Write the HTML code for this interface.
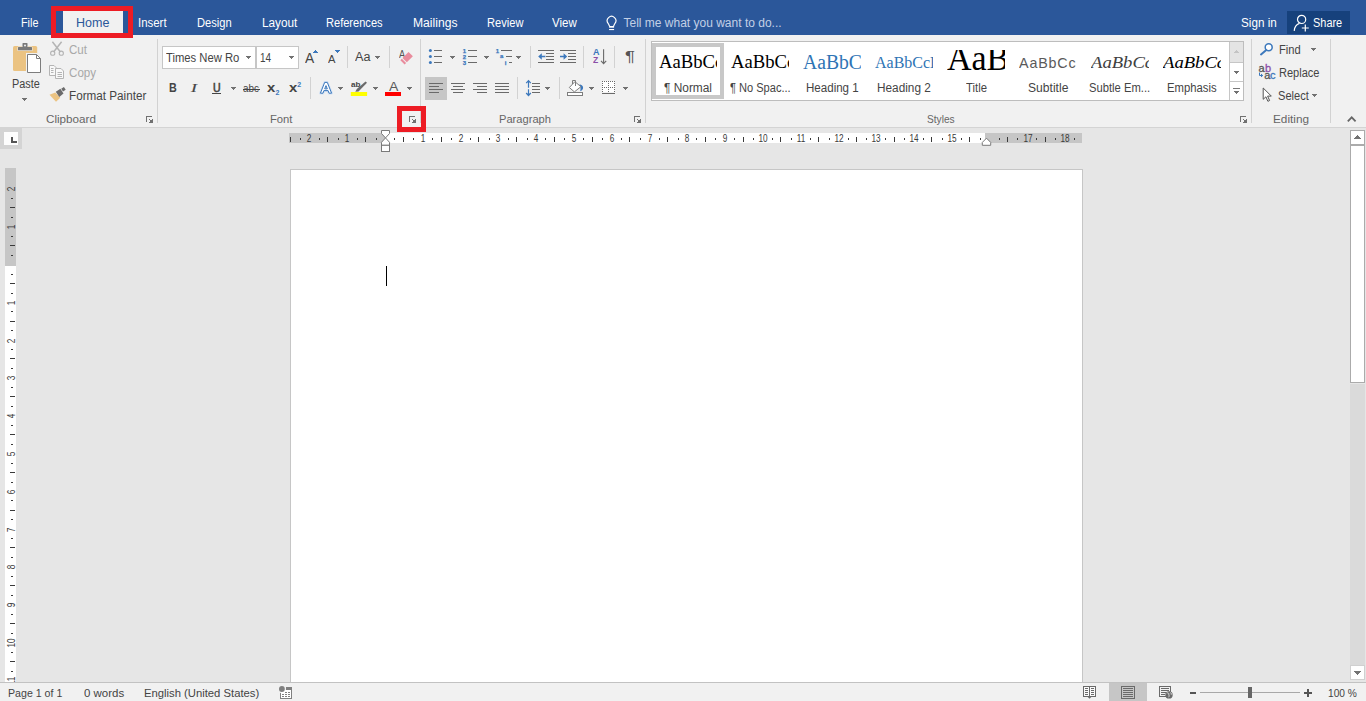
<!DOCTYPE html>
<html lang="en">
<head>
<meta charset="utf-8">
<title>Document1 - Word</title>
<style>
html,body{margin:0;padding:0}
body{width:1366px;height:701px;overflow:hidden;position:relative;background:#e6e6e6;
 font-family:"Liberation Sans",sans-serif;font-size:12px;color:#444}
.a{position:absolute}
.t{position:absolute;white-space:nowrap;line-height:16px;height:16px;transform-origin:0 0}
#tabs{left:0;top:0;width:1366px;height:35px;background:#2b579a}
#tabs .t{color:#fff;font-size:12px;top:15px}
#ribbon{left:0;top:35px;width:1366px;height:92px;background:#f1f1f1;border-bottom:1px solid #d4d4d4}
.gl{top:111.200px;color:#666;font-size:11px}
.sep{position:absolute;width:1px;background:#d2d2d2}
.r1{top:42px}.r2{top:65px}.r3{top:88px}
.dis{color:#a8a8a8}
.pv{position:absolute;top:46px;width:58px;height:32px;overflow:hidden;line-height:44px;font-size:0;white-space:nowrap}
.pv span{position:relative;line-height:0;font-family:'Liberation Serif',serif;color:#000}
.sl{top:79.500px}
.rn{top:130.900px;width:20px;text-align:center;font-size:10px;color:#3a3a3a;transform:scaleX(.820);transform-origin:50% 0}
.vn{left:1.500px;width:20px;text-align:center;font-size:10px;color:#3a3a3a;transform:rotate(-90deg) scaleX(.820);transform-origin:50% 50%}
.rp{font-size:11px;-webkit-text-stroke:.300px currentColor}
.tiny{font-size:6px;font-weight:bold;color:#3c78bc;-webkit-text-stroke:.250px #3c78bc;margin-top:-.700px}
#status{left:0;top:682px;width:1366px;height:18px;background:#f1f1f1;border-top:1px solid #c2c2c2}
#status .t{top:2.200px;color:#444;font-size:11px}
#page{left:290px;top:169px;width:791px;height:520px;background:#fff;border:1px solid #c6c6c6}
svg{position:absolute;overflow:visible}
</style>
</head>
<body>
<!-- ===== TAB STRIP ===== -->
<div id="tabs" class="a">
  <div class="a" style="left:63px;top:11px;width:60px;height:24px;background:#f1f1f1"></div>
  <div class="t" style="left:20.6px;transform:scaleX(.90)">File</div>
  <div class="t" style="left:75.6px;color:#2b579a;transform:scaleX(1.045)">Home</div>
  <div class="t" style="left:138px;transform:scaleX(.953)">Insert</div>
  <div class="t" style="left:196.6px;transform:scaleX(.929)">Design</div>
  <div class="t" style="left:261.5px;transform:scaleX(.982)">Layout</div>
  <div class="t" style="left:326.3px;transform:scaleX(.922)">References</div>
  <div class="t" style="left:412.5px;transform:scaleX(1.011)">Mailings</div>
  <div class="t" style="left:486.6px;transform:scaleX(.925)">Review</div>
  <div class="t" style="left:552.3px;transform:scaleX(.957)">View</div>
  <svg style="left:605px;top:14.500px" width="14" height="17" viewBox="0 0 14 17"><path d="M4.600 11.200L3.260 8.510A4.300 4.300 0 1 1 9.840 8.510L8.500 11.200" fill="none" stroke="#fff" stroke-width="1.150" stroke-linejoin="round"/><rect x="4.100" y="11" width="5" height="1.700" fill="#fff"/><path d="M4.100 14.550h5" stroke="#fff" stroke-width="1.100" fill="none"/></svg>
  <div class="t" style="left:623.5px;color:#c3d0e6;transform:scaleX(1)">Tell me what you want to do...</div>
  <div class="t" style="left:1240.9px;transform:scaleX(.975)">Sign in</div>
  <div class="a" style="left:1287px;top:11px;width:63px;height:23px;background:#16417c"></div>
  <svg style="left:1293px;top:14px" width="17" height="18" viewBox="0 0 17 18"><circle cx="8.600" cy="5.400" r="4.100" fill="none" stroke="#fff" stroke-width="1.200"/><path d="M1.200 16.900c.3-3.900 2.300-6.500 5.200-7.500" fill="none" stroke="#fff" stroke-width="1.200"/><path d="M12.300 10.500v7M8.800 14h7" stroke="#fff" stroke-width="1.200" fill="none"/></svg>
  <div class="t" style="left:1313.1px;transform:scaleX(.912)">Share</div>
</div>
<!-- red highlight around Home -->
<div class="a" style="left:51px;top:6px;width:72px;height:22px;border:5px solid #ed1c24;z-index:20"></div>

<!-- ===== RIBBON ===== -->
<div id="ribbon" class="a"></div>
<div id="rb" class="a" style="left:0;top:0;width:0;height:0">
<!-- group separators -->
<div class="sep" style="left:157px;top:39px;height:84px"></div>
<div class="sep" style="left:420px;top:39px;height:84px"></div>
<div class="sep" style="left:645px;top:39px;height:84px"></div>
<div class="sep" style="left:1251px;top:39px;height:84px"></div>
<div class="sep" style="left:1330px;top:39px;height:84px"></div>
<!-- group labels -->
<div class="t gl" style="left:45.5px;transform:scaleX(1.06)">Clipboard</div>
<div class="t gl" style="left:269.9px;transform:scaleX(1.022)">Font</div>
<div class="t gl" style="left:498.5px;transform:scaleX(1.012)">Paragraph</div>
<div class="t gl" style="left:926.8px;transform:scaleX(.921)">Styles</div>
<div class="t gl" style="left:1272.5px;transform:scaleX(1.07)">Editing</div>
<!--CLIPBOARD-->
<svg style="left:10px;top:40px" width="36" height="36" viewBox="10 40 36 36">
  <rect x="13" y="46" width="24.2" height="25" rx="1.6" fill="#ebc382"/>
  <path d="M17.5 50.700V47.500a1 1 0 0 1 1-1h3.500v-2.500a1 1 0 0 1 1-1h4a1 1 0 0 1 1 1v2.500h3.500a1 1 0 0 1 1 1v3.200z" fill="#f1f1f1"/>
  <path d="M18 50.200V47.500a.5.5 0 0 1 .5-.5h4v-3.500a.5.5 0 0 1 .5-.5h4a.5.5 0 0 1 .5.5v3.500h4a.5.5 0 0 1 .5.5v2.700z" fill="#797979"/>
  <circle cx="25" cy="45.600" r="1" fill="#f1f1f1"/>
  <path d="M26 53h11.500l4.500 4.500v16.500h-16z" fill="#f1f1f1"/>
  <path d="M27.500 54.500h9l4 4v14h-13z" fill="#fff" stroke="#7d7d7d" stroke-width="1"/>
  <path d="M36.500 54.500v4h4" fill="none" stroke="#7d7d7d" stroke-width="1"/>
</svg>
<div class="t" style="left:11.800px;top:75.500px;transform:scaleX(.906)">Paste</div>
<svg style="left:22px;top:98px" width="6" height="4" viewBox="0 0 6 4"><g fill="#717171" shape-rendering="crispEdges"><rect x="0" y="0" width="5" height="1"/><rect x="1" y="1" width="3" height="1"/><rect x="2" y="2" width="1" height="1"/></g></svg>
<!-- cut -->
<svg style="left:49px;top:40px" width="17" height="17" viewBox="49 40 17 17">
  <path d="M52.400 41.800l8 10.200M61.600 41.800l-8 10.200" stroke="#b4b4b4" stroke-width="1.500" fill="none"/>
  <circle cx="52.700" cy="53.200" r="2.100" fill="none" stroke="#b4b4b4" stroke-width="1.100"/>
  <circle cx="61.300" cy="53.200" r="2.100" fill="none" stroke="#b4b4b4" stroke-width="1.100"/>
</svg>
<div class="t r1 dis" style="left:68.700px;transform:scaleX(.963)">Cut</div>
<!-- copy -->
<svg style="left:48px;top:64px" width="17" height="16" viewBox="48 64 17 16">
  <path d="M49.500 65.500h4.500l2 2v8h-6.500z" fill="#f8f8f8" stroke="#b4b4b4" stroke-width="1"/>
  <path d="M51 68.500h2.500M51 70.500h2.500M51 72.500h2.500" stroke="#b4b4b4" stroke-width="1" fill="none"/>
  <path d="M55.500 68.500h5.500l2.500 2.500v7.500h-8z" fill="#f8f8f8" stroke="#b4b4b4" stroke-width="1"/>
  <path d="M57.500 72.500h4.500M57.500 74.500h4.500M57.500 76.500h4.500" stroke="#b4b4b4" stroke-width="1" fill="none"/>
</svg>
<div class="t r2 dis" style="left:68.700px;transform:scaleX(.967)">Copy</div>
<!-- format painter -->
<svg style="left:48px;top:86px" width="19" height="17" viewBox="48 86 19 17">
  <path d="M49.500 94.700l5.800-2.300 5 5.400-4.300 4z" fill="#ebc382"/>
  <path d="M55.800 91.800l4.600-3 3.100 4.800-4.200 3.300z" fill="#6b6b6b"/>
  <path d="M61.200 88.700l2.700-1.700 1.800 2.700-2.700 1.800z" fill="#6b6b6b"/>
</svg>
<div class="t r3" style="left:68.700px;transform:scaleX(.975)">Format Painter</div>
<svg style="left:146px;top:116px" width="8" height="8" viewBox="0 0 8 8"><g fill="#707070" shape-rendering="crispEdges"><rect x="0" y="0" width="6" height="1"/><rect x="0" y="0" width="1" height="6"/><rect x="3" y="3" width="1" height="1"/><rect x="4" y="4" width="3" height="3"/><rect x="6" y="3" width="1" height="1"/><rect x="3" y="6" width="1" height="1"/></g></svg>
<!--FONT-->
<div class="a" style="left:162px;top:46px;width:92px;height:21px;background:#fff;border:1px solid #c6c6c6"></div>
<div class="a" style="left:256px;top:46px;width:41px;height:21px;background:#fff;border:1px solid #c6c6c6"></div>
<div class="t" style="left:166.300px;top:50px;transform:scaleX(.938)">Times New Ro</div>
<svg class="ar" style="left:246px;top:56px" width="6" height="4" viewBox="0 0 6 4"><g fill="#717171" shape-rendering="crispEdges"><rect x="0" y="0" width="5" height="1"/><rect x="1" y="1" width="3" height="1"/><rect x="2" y="2" width="1" height="1"/></g></svg>
<div class="t" style="left:259.600px;top:50px;transform:scaleX(.831)">14</div>
<svg class="ar" style="left:289px;top:56px" width="6" height="4" viewBox="0 0 6 4"><g fill="#717171" shape-rendering="crispEdges"><rect x="0" y="0" width="5" height="1"/><rect x="1" y="1" width="3" height="1"/><rect x="2" y="2" width="1" height="1"/></g></svg>
<!-- grow / shrink -->
<div class="t" style="left:305.300px;top:49px;font-size:14.500px;line-height:18px;height:18px;transform:scaleX(.950)">A</div>
<svg style="left:313px;top:50px" width="6" height="4" viewBox="0 0 6 4"><g fill="#3c78bc" shape-rendering="crispEdges"><rect x="0" y="2" width="5" height="1"/><rect x="1" y="1" width="3" height="1"/><rect x="2" y="0" width="1" height="1"/></g></svg>
<div class="t" style="left:328.100px;top:51px;font-size:11.500px;transform:scaleX(.970)">A</div>
<svg style="left:335px;top:50px" width="6" height="4" viewBox="0 0 6 4"><g fill="#3c78bc" shape-rendering="crispEdges"><rect x="0" y="0" width="5" height="1"/><rect x="1" y="1" width="3" height="1"/><rect x="2" y="2" width="1" height="1"/></g></svg>
<div class="sep" style="left:347px;top:46px;height:22px"></div>
<div class="t" style="left:354.900px;top:49px;transform:scaleX(1.050)">Aa</div>
<svg class="ar" style="left:375px;top:56px" width="6" height="4" viewBox="0 0 6 4"><g fill="#717171" shape-rendering="crispEdges"><rect x="0" y="0" width="5" height="1"/><rect x="1" y="1" width="3" height="1"/><rect x="2" y="2" width="1" height="1"/></g></svg>
<div class="sep" style="left:389px;top:46px;height:22px"></div>
<!-- clear formatting -->
<div class="t" style="left:398.900px;top:46px;font-size:11.500px;color:#555;transform:scaleX(.800)">A</div>
<svg style="left:398px;top:48px" width="18" height="18" viewBox="398 48 18 18">
  <path d="M408.500 52l4.400 4.200-6.100 6-4.300-4.200z" fill="#e98c9d"/>
  <path d="M401.800 58.800l4.300 4.200-1.500 1.400-4.200-4.200z" fill="#e98c9d"/>
</svg>
<!-- row 2 -->
<div class="t" style="left:168.600px;top:80px;font-weight:bold;font-size:12.500px;transform:scaleX(.860)">B</div>
<div class="t" style="left:190.500px;top:79.500px;font-family:'Liberation Serif',serif;font-style:italic;font-size:13.500px;-webkit-text-stroke:.200px #444;transform:scaleX(1.300)">I</div>
<div class="t" style="left:212.600px;top:80px;font-size:12px;-webkit-text-stroke:.600px #444;transform:scaleX(.880)">U</div>
<div class="a" style="left:212px;top:93px;width:9px;height:1px;background:#444"></div>
<svg class="ar" style="left:231px;top:87px" width="6" height="4" viewBox="0 0 6 4"><g fill="#717171" shape-rendering="crispEdges"><rect x="0" y="0" width="5" height="1"/><rect x="1" y="1" width="3" height="1"/><rect x="2" y="2" width="1" height="1"/></g></svg>
<div class="t" style="left:243px;top:80px;font-size:11.500px;transform:scaleX(.860)">abc</div>
<div class="a" style="left:242.500px;top:88.500px;width:17px;height:1px;background:#444"></div>
<div class="t" style="left:266.800px;top:80px;font-weight:bold;font-size:13.500px;transform:scaleX(1.100)">x</div>
<div class="t" style="left:275.500px;top:84.800px;font-weight:bold;font-size:7px;color:#3c78bc">2</div>
<div class="t" style="left:288.800px;top:80px;font-weight:bold;font-size:13.500px;transform:scaleX(1.100)">x</div>
<div class="t" style="left:297.300px;top:76.500px;font-weight:bold;font-size:7px;color:#3c78bc">2</div>
<div class="sep" style="left:310px;top:77px;height:22px"></div>
<!-- text effects -->
<svg style="left:316px;top:78px" width="20" height="20" viewBox="316 78 20 20">
  <path d="M324.700 82.400h2.600l4.300 10.800h-2.600l-.9-2.600h-4.200l-.9 2.600h-2.600zM326 85.600l-1.300 3.300h2.600z" fill="#fff" fill-rule="evenodd" stroke="#d3e2f4" stroke-width="2.600" stroke-linejoin="round"/>
  <path d="M324.700 82.400h2.600l4.300 10.800h-2.600l-.9-2.600h-4.200l-.9 2.600h-2.600zM326 85.600l-1.300 3.300h2.600z" fill="#fff" fill-rule="evenodd" stroke="#3c78bc" stroke-width="1" stroke-linejoin="round"/>
</svg>
<svg class="ar" style="left:338px;top:87px" width="6" height="4" viewBox="0 0 6 4"><g fill="#717171" shape-rendering="crispEdges"><rect x="0" y="0" width="5" height="1"/><rect x="1" y="1" width="3" height="1"/><rect x="2" y="2" width="1" height="1"/></g></svg>
<!-- highlight -->
<div class="t" style="left:351px;top:77px;font-size:8px;font-weight:bold;color:#444;transform:scaleX(1.020)">ab</div>
<svg style="left:350px;top:80px" width="18" height="17" viewBox="350 80 18 17">
  <path d="M365.500 81.500l1.500 1.300-8.500 8.700-3.200.3 1.500-2.700z" fill="#6b6b6b"/>
  <rect x="350.800" y="92" width="16.300" height="4" fill="#ffff00"/>
</svg>
<svg class="ar" style="left:373px;top:87px" width="6" height="4" viewBox="0 0 6 4"><g fill="#717171" shape-rendering="crispEdges"><rect x="0" y="0" width="5" height="1"/><rect x="1" y="1" width="3" height="1"/><rect x="2" y="2" width="1" height="1"/></g></svg>
<!-- font colour -->
<div class="t" style="left:388.500px;top:78px;font-size:13.500px;line-height:18px;height:18px;color:#5a5a5a;transform:scaleX(1.040)">A</div>
<div class="a" style="left:385px;top:92px;width:16px;height:4px;background:#ff0000"></div>
<svg class="ar" style="left:407px;top:87px" width="6" height="4" viewBox="0 0 6 4"><g fill="#717171" shape-rendering="crispEdges"><rect x="0" y="0" width="5" height="1"/><rect x="1" y="1" width="3" height="1"/><rect x="2" y="2" width="1" height="1"/></g></svg>
<!-- font launcher -->
<svg style="left:409px;top:116px" width="8" height="8" viewBox="0 0 8 8"><g fill="#707070" shape-rendering="crispEdges"><rect x="0" y="0" width="6" height="1"/><rect x="0" y="0" width="1" height="6"/><rect x="3" y="3" width="1" height="1"/><rect x="4" y="4" width="3" height="3"/><rect x="6" y="3" width="1" height="1"/><rect x="3" y="6" width="1" height="1"/></g></svg>
<div class="a" style="left:397px;top:106px;width:19px;height:16px;border:5px solid #ed1c24;z-index:20"></div>
<!--PARA-->
<svg style="left:424px;top:44px" width="216" height="58" viewBox="424 44 216 58" shape-rendering="crispEdges">
  <!-- bullets -->
  <g fill="#6a6a6a">
   <rect x="434" y="50" width="8" height="1"/><rect x="434" y="56" width="8" height="1"/><rect x="434" y="62" width="8" height="1"/>
   <rect x="468" y="50" width="9" height="1"/><rect x="468" y="56" width="9" height="1"/><rect x="468" y="62" width="9" height="1"/>
   <rect x="501" y="50" width="11" height="1"/><rect x="506" y="56" width="6" height="1"/><rect x="509" y="62" width="3" height="1"/>
   <!-- decrease indent -->
   <rect x="538" y="50" width="16" height="1"/><rect x="546" y="53" width="8" height="1"/><rect x="546" y="56" width="8" height="1"/><rect x="546" y="59" width="8" height="1"/><rect x="538" y="62" width="16" height="1"/>
   <!-- increase indent -->
   <rect x="560" y="50" width="16" height="1"/><rect x="568" y="53" width="8" height="1"/><rect x="568" y="56" width="8" height="1"/><rect x="568" y="59" width="8" height="1"/><rect x="560" y="62" width="16" height="1"/>
  </g>
  <g fill="#3c78bc" shape-rendering="auto">
   <circle cx="430.400" cy="50.500" r="1.500"/><circle cx="430.400" cy="56.500" r="1.500"/><circle cx="430.400" cy="62.500" r="1.500"/>
   <path d="M538.200 56.500l3.600-3.300v2.500h3.600v1.600h-3.600v2.500z"/>
   <path d="M567.200 56.500l-3.600-3.300v2.500h-3.600v1.600h3.600v2.500z"/>
  </g>
  <!-- sort arrow -->
  <g shape-rendering="auto" fill="none" stroke="#6a6a6a" stroke-width="1.100"><path d="M603.600 49.200v14M601 60.800l2.600 2.800 2.600-2.800"/></g>
  <!-- row 2 -->
  <rect x="425" y="77" width="22" height="23" fill="#c6c6c6"/>
  <g fill="#6a6a6a">
   <rect x="429" y="83" width="14" height="1"/><rect x="429" y="86" width="10" height="1"/><rect x="429" y="89" width="14" height="1"/><rect x="429" y="92" width="10" height="1"/>
   <rect x="451" y="83" width="14" height="1"/><rect x="453" y="86" width="10" height="1"/><rect x="451" y="89" width="14" height="1"/><rect x="453" y="92" width="10" height="1"/>
   <rect x="473" y="83" width="14" height="1"/><rect x="477" y="86" width="10" height="1"/><rect x="473" y="89" width="14" height="1"/><rect x="477" y="92" width="10" height="1"/>
   <rect x="495" y="83" width="14" height="1"/><rect x="495" y="86" width="14" height="1"/><rect x="495" y="89" width="14" height="1"/><rect x="495" y="92" width="14" height="1"/>
   <rect x="532" y="83" width="8" height="1"/><rect x="532" y="86" width="8" height="1"/><rect x="532" y="89" width="8" height="1"/><rect x="532" y="92" width="8" height="1"/>
  </g>
  <!-- line spacing arrows -->
  <g shape-rendering="auto" fill="none" stroke="#3c78bc" stroke-width="1.200"><path d="M528.500 80.800v6.900M528.500 89.300v6.100M526.200 83.200l2.300-2.500 2.300 2.500M526.200 93l2.300 2.500 2.300-2.500"/></g>
  <!-- shading -->
  <g shape-rendering="auto">
   <path d="M579.400 84.200c2.200.3 3.800 1.800 3.700 3.600-.1 1.600-1.300 2.900-2.900 3.500.6-2.300.5-4.700-.8-7.100z" fill="#3c78bc"/>
   <path d="M569.300 87.500l5.600-5.800 6 5-6.500 5.200z" fill="#fff" stroke="#7d7d7d" stroke-width="1"/>
   <path d="M572.500 84v-3.500h3v5.500" fill="none" stroke="#7d7d7d" stroke-width="1"/>
   <rect x="567.500" y="92.500" width="15" height="3" fill="#fff" stroke="#7d7d7d" stroke-width="1"/>
  </g>
  <!-- borders -->
  <rect x="602" y="81" width="13" height="11" fill="#fff"/>
  <g fill="#6a6a6a">
   <rect x="602" y="93" width="13" height="1"/>
   <path d="M602 81h1v1h-1zM604 81h1v1h-1zM606 81h1v1h-1zM608 81h1v1h-1zM610 81h1v1h-1zM612 81h1v1h-1zM614 81h1v1h-1z"/>
   <path d="M602 87h1v1h-1zM604 87h1v1h-1zM606 87h1v1h-1zM608 87h1v1h-1zM610 87h1v1h-1zM612 87h1v1h-1zM614 87h1v1h-1z"/>
   <path d="M602 83h1v1h-1zM608 83h1v1h-1zM614 83h1v1h-1zM602 85h1v1h-1zM608 85h1v1h-1zM614 85h1v1h-1zM602 89h1v1h-1zM608 89h1v1h-1zM614 89h1v1h-1zM602 91h1v1h-1zM608 91h1v1h-1zM614 91h1v1h-1z"/>
  </g>
</svg>
<div class="t tiny" style="left:462.800px;top:43.800px">1</div>
<div class="t tiny" style="left:462.800px;top:49.800px">2</div>
<div class="t tiny" style="left:462.800px;top:55.800px">3</div>
<div class="t tiny" style="left:495.800px;top:43.800px">1</div>
<div class="t tiny" style="left:499.900px;top:49px">a</div>
<div class="t tiny" style="left:504.800px;top:55.500px">i</div>
<svg class="ar" style="left:450px;top:56px" width="6" height="4" viewBox="0 0 6 4"><g fill="#717171" shape-rendering="crispEdges"><rect x="0" y="0" width="5" height="1"/><rect x="1" y="1" width="3" height="1"/><rect x="2" y="2" width="1" height="1"/></g></svg>
<svg class="ar" style="left:484px;top:56px" width="6" height="4" viewBox="0 0 6 4"><g fill="#717171" shape-rendering="crispEdges"><rect x="0" y="0" width="5" height="1"/><rect x="1" y="1" width="3" height="1"/><rect x="2" y="2" width="1" height="1"/></g></svg>
<svg class="ar" style="left:516px;top:56px" width="6" height="4" viewBox="0 0 6 4"><g fill="#717171" shape-rendering="crispEdges"><rect x="0" y="0" width="5" height="1"/><rect x="1" y="1" width="3" height="1"/><rect x="2" y="2" width="1" height="1"/></g></svg>
<div class="sep" style="left:530px;top:46px;height:22px"></div>
<div class="sep" style="left:583px;top:46px;height:22px"></div>
<div class="t" style="left:592.600px;top:44px;font-size:9.500px;font-weight:bold;color:#3c78bc;transform:scaleX(.950)">A</div>
<div class="t" style="left:592.800px;top:52.200px;font-size:9.500px;font-weight:bold;color:#8b4fa8;transform:scaleX(.900)">Z</div>
<div class="sep" style="left:614px;top:46px;height:22px"></div>
<div class="t" style="left:624.600px;top:45.700px;font-size:14.500px;line-height:20px;height:20px;color:#555;transform:scaleX(1.280)">¶</div>
<div class="sep" style="left:517px;top:77px;height:22px"></div>
<svg class="ar" style="left:545px;top:87px" width="6" height="4" viewBox="0 0 6 4"><g fill="#717171" shape-rendering="crispEdges"><rect x="0" y="0" width="5" height="1"/><rect x="1" y="1" width="3" height="1"/><rect x="2" y="2" width="1" height="1"/></g></svg>
<div class="sep" style="left:559px;top:77px;height:22px"></div>
<svg class="ar" style="left:589px;top:87px" width="6" height="4" viewBox="0 0 6 4"><g fill="#717171" shape-rendering="crispEdges"><rect x="0" y="0" width="5" height="1"/><rect x="1" y="1" width="3" height="1"/><rect x="2" y="2" width="1" height="1"/></g></svg>
<svg class="ar" style="left:623px;top:87px" width="6" height="4" viewBox="0 0 6 4"><g fill="#717171" shape-rendering="crispEdges"><rect x="0" y="0" width="5" height="1"/><rect x="1" y="1" width="3" height="1"/><rect x="2" y="2" width="1" height="1"/></g></svg>
<svg style="left:634px;top:116px" width="8" height="8" viewBox="0 0 8 8"><g fill="#707070" shape-rendering="crispEdges"><rect x="0" y="0" width="6" height="1"/><rect x="0" y="0" width="1" height="6"/><rect x="3" y="3" width="1" height="1"/><rect x="4" y="4" width="3" height="3"/><rect x="6" y="3" width="1" height="1"/><rect x="3" y="6" width="1" height="1"/></g></svg>
<!--STYLES-->
<div class="a" style="left:651px;top:41px;width:591px;height:58px;background:#fff;border:1px solid #bdbdbd"></div>
<div class="a" style="left:652px;top:43px;width:64px;height:48px;border:4px solid #c8c8c8"></div>
<div class="pv" style="left:659px"><span style="font-size:18.700px">AaBbCcD</span></div>
<div class="pv" style="left:731px"><span style="font-size:18.700px">AaBbCcD</span></div>
<div class="pv" style="left:803px"><span style="font-size:21.600px;color:#2e74b5;top:.800px;display:inline-block;transform:scaleX(.910);transform-origin:0 50%">AaBbCc</span></div>
<div class="pv" style="left:875px"><span style="font-size:16px;color:#2e74b5;top:-.400px">AaBbCcD</span></div>
<div class="pv" style="left:947px;clip-path:inset(4.100px 0 0 0)"><span style="font-size:35px;top:1.600px;display:inline-block;transform:scaleX(.970);transform-origin:0 50%">AaBb</span></div>
<div class="pv" style="left:1019px"><span style="font-family:'Liberation Sans',sans-serif;font-size:14.300px;color:#5a5a5a;letter-spacing:.850px;top:-.400px">AaBbCc</span></div>
<div class="pv" style="left:1091px"><span style="font-size:17.500px;font-style:italic;color:#404040;top:-.300px;display:inline-block;transform:scaleX(1.065);transform-origin:0 50%">AaBbCcD</span></div>
<div class="pv" style="left:1163px"><span style="font-size:17.500px;font-style:italic;top:-.300px;display:inline-block;transform:scaleX(1.065);transform-origin:0 50%">AaBbCcD</span></div>
<div class="t sl" style="left:663.600px;transform:scaleX(.991)">¶ Normal</div>
<div class="t sl" style="left:729.500px;transform:scaleX(.922)">¶ No Spac...</div>
<div class="t sl" style="left:805.500px;transform:scaleX(.963)">Heading 1</div>
<div class="t sl" style="left:877.300px;transform:scaleX(.983)">Heading 2</div>
<div class="t sl" style="left:965.700px;transform:scaleX(.944)">Title</div>
<div class="t sl" style="left:1028px;transform:scaleX(1.009)">Subtitle</div>
<div class="t sl" style="left:1088.900px;transform:scaleX(.935)">Subtle Em...</div>
<div class="t sl" style="left:1167.300px;transform:scaleX(.940)">Emphasis</div>
<!-- gallery scroll column -->
<div class="a" style="left:1229px;top:42px;width:1px;height:58px;background:#c6c6c6"></div>
<div class="a" style="left:1230px;top:42px;width:13px;height:20px;background:#e4e4e4"></div>
<div class="a" style="left:1230px;top:62px;width:13px;height:1px;background:#c6c6c6"></div>
<div class="a" style="left:1230px;top:81px;width:13px;height:1px;background:#c6c6c6"></div>
<svg style="left:1234px;top:50px" width="6" height="4" viewBox="0 0 6 4"><g fill="#c4c4c4" shape-rendering="crispEdges"><rect x="0" y="2" width="5" height="1"/><rect x="1" y="1" width="3" height="1"/><rect x="2" y="0" width="1" height="1"/></g></svg>
<svg style="left:1234px;top:71px" width="6" height="4" viewBox="0 0 6 4"><g fill="#717171" shape-rendering="crispEdges"><rect x="0" y="0" width="5" height="1"/><rect x="1" y="1" width="3" height="1"/><rect x="2" y="2" width="1" height="1"/></g></svg>
<div class="a" style="left:1233px;top:88px;width:7px;height:1px;background:#777"></div>
<svg style="left:1234px;top:91px" width="6" height="4" viewBox="0 0 6 4"><g fill="#717171" shape-rendering="crispEdges"><rect x="0" y="0" width="5" height="1"/><rect x="1" y="1" width="3" height="1"/><rect x="2" y="2" width="1" height="1"/></g></svg>
<svg style="left:1240px;top:116px" width="8" height="8" viewBox="0 0 8 8"><g fill="#707070" shape-rendering="crispEdges"><rect x="0" y="0" width="6" height="1"/><rect x="0" y="0" width="1" height="6"/><rect x="3" y="3" width="1" height="1"/><rect x="4" y="4" width="3" height="3"/><rect x="6" y="3" width="1" height="1"/><rect x="3" y="6" width="1" height="1"/></g></svg>
<!--EDITING-->
<svg style="left:1258px;top:42px" width="18" height="14" viewBox="1258 42 18 14">
  <circle cx="1268.700" cy="47.300" r="3.500" fill="#fff" stroke="#3c78bc" stroke-width="1.500"/>
  <path d="M1266 50.200l-5 4.200" stroke="#3c78bc" stroke-width="2" stroke-linecap="round" fill="none"/>
</svg>
<div class="t r1" style="left:1278.700px;transform:scaleX(.930)">Find</div>
<svg class="ar" style="left:1311px;top:48px" width="6" height="4" viewBox="0 0 6 4"><g fill="#717171" shape-rendering="crispEdges"><rect x="0" y="0" width="5" height="1"/><rect x="1" y="1" width="3" height="1"/><rect x="2" y="2" width="1" height="1"/></g></svg>
<div class="t rp" style="left:1258.600px;top:60.400px;color:#555">a</div>
<div class="t rp" style="left:1265px;top:60.400px;color:#8b4fa8">b</div>
<div class="t rp" style="left:1264.200px;top:67.100px;color:#555">a</div>
<div class="t rp" style="left:1270px;top:67.100px;color:#3c78bc">c</div>
<svg style="left:1258px;top:72px" width="6" height="6" viewBox="0 0 6 6"><path d="M1.500.5v3h3M3 2l1.700 1.500L3 5" fill="none" stroke="#3c78bc" stroke-width="1"/></svg>
<div class="t r2" style="left:1278.700px;transform:scaleX(.920)">Replace</div>
<svg style="left:1262px;top:87px" width="11" height="16" viewBox="1262 87 11 16">
  <path d="M1263.200 88v11.300l2.700-2.500 2 4.500 1.700-.8-2-4.400h3.700z" fill="#fff" stroke="#555" stroke-width="1" stroke-linejoin="round"/>
</svg>
<div class="t r3" style="left:1278.300px;transform:scaleX(.923)">Select</div>
<svg class="ar" style="left:1312px;top:94px" width="6" height="4" viewBox="0 0 6 4"><g fill="#717171" shape-rendering="crispEdges"><rect x="0" y="0" width="5" height="1"/><rect x="1" y="1" width="3" height="1"/><rect x="2" y="2" width="1" height="1"/></g></svg>
<svg style="left:1347px;top:115px" width="10" height="8" viewBox="0 0 10 8"><path d="M.800 6.300l3.900-4 3.900 4" fill="none" stroke="#666" stroke-width="1.800"/></svg>
</div>

<!-- ===== DOCUMENT AREA ===== -->
<div id="page" class="a"></div>
<div class="a" style="left:386px;top:266px;width:1px;height:20px;background:#000"></div>
<!-- tab selector -->
<div class="a" style="left:0;top:128px;width:22px;height:21px;background:#d4d4d4"></div>
<div class="a" style="left:4px;top:132px;width:14px;height:13px;background:#fdfdfd"></div>
<div class="a" style="left:11px;top:137px;width:2px;height:6px;background:#555"></div>
<div class="a" style="left:11px;top:141px;width:6px;height:2px;background:#555"></div>
<!--RULERS-->
<!-- horizontal ruler -->
<div class="a" style="left:289px;top:133px;width:793px;height:10px;background:#c6c6c6"></div>
<div class="a" style="left:385px;top:133px;width:600px;height:10px;background:#fff"></div>
<svg style="left:0;top:0" width="1366" height="160" viewBox="0 0 1366 160" shape-rendering="crispEdges"><g fill="#3a3a3a"><rect x="290" y="137" width="1" height="5"/><rect x="300" y="138" width="1" height="2"/><rect x="319" y="138" width="1" height="2"/><rect x="327" y="137" width="1" height="5"/><rect x="338" y="138" width="1" height="2"/><rect x="357" y="138" width="1" height="2"/><rect x="365" y="137" width="1" height="5"/><rect x="376" y="138" width="1" height="2"/><rect x="394" y="138" width="1" height="2"/><rect x="403" y="137" width="1" height="5"/><rect x="413" y="138" width="1" height="2"/><rect x="432" y="138" width="1" height="2"/><rect x="441" y="137" width="1" height="5"/><rect x="451" y="138" width="1" height="2"/><rect x="470" y="138" width="1" height="2"/><rect x="478" y="137" width="1" height="5"/><rect x="489" y="138" width="1" height="2"/><rect x="508" y="138" width="1" height="2"/><rect x="516" y="137" width="1" height="5"/><rect x="527" y="138" width="1" height="2"/><rect x="545" y="138" width="1" height="2"/><rect x="554" y="137" width="1" height="5"/><rect x="564" y="138" width="1" height="2"/><rect x="583" y="138" width="1" height="2"/><rect x="592" y="137" width="1" height="5"/><rect x="602" y="138" width="1" height="2"/><rect x="621" y="138" width="1" height="2"/><rect x="629" y="137" width="1" height="5"/><rect x="640" y="138" width="1" height="2"/><rect x="659" y="138" width="1" height="2"/><rect x="667" y="137" width="1" height="5"/><rect x="678" y="138" width="1" height="2"/><rect x="696" y="138" width="1" height="2"/><rect x="705" y="137" width="1" height="5"/><rect x="715" y="138" width="1" height="2"/><rect x="734" y="138" width="1" height="2"/><rect x="743" y="137" width="1" height="5"/><rect x="753" y="138" width="1" height="2"/><rect x="772" y="138" width="1" height="2"/><rect x="780" y="137" width="1" height="5"/><rect x="791" y="138" width="1" height="2"/><rect x="810" y="138" width="1" height="2"/><rect x="818" y="137" width="1" height="5"/><rect x="829" y="138" width="1" height="2"/><rect x="848" y="138" width="1" height="2"/><rect x="856" y="137" width="1" height="5"/><rect x="866" y="138" width="1" height="2"/><rect x="885" y="138" width="1" height="2"/><rect x="894" y="137" width="1" height="5"/><rect x="904" y="138" width="1" height="2"/><rect x="923" y="138" width="1" height="2"/><rect x="931" y="137" width="1" height="5"/><rect x="942" y="138" width="1" height="2"/><rect x="961" y="138" width="1" height="2"/><rect x="969" y="137" width="1" height="5"/><rect x="980" y="138" width="1" height="2"/><rect x="999" y="138" width="1" height="2"/><rect x="1007" y="137" width="1" height="5"/><rect x="1017" y="138" width="1" height="2"/><rect x="1036" y="138" width="1" height="2"/><rect x="1045" y="137" width="1" height="5"/><rect x="1055" y="138" width="1" height="2"/><rect x="1074" y="138" width="1" height="2"/></g></svg>
<div class="t rn" style="left:299.4px">2</div>
<div class="t rn" style="left:337.2px">1</div>
<div class="t rn" style="left:412.8px">1</div>
<div class="t rn" style="left:450.6px">2</div>
<div class="t rn" style="left:488.4px">3</div>
<div class="t rn" style="left:526.2px">4</div>
<div class="t rn" style="left:564.0px">5</div>
<div class="t rn" style="left:601.8px">6</div>
<div class="t rn" style="left:639.6px">7</div>
<div class="t rn" style="left:677.3px">8</div>
<div class="t rn" style="left:715.1px">9</div>
<div class="t rn" style="left:752.9px">10</div>
<div class="t rn" style="left:790.7px">11</div>
<div class="t rn" style="left:828.5px">12</div>
<div class="t rn" style="left:866.3px">13</div>
<div class="t rn" style="left:904.1px">14</div>
<div class="t rn" style="left:941.9px">15</div>
<div class="t rn" style="left:1017.5px">17</div>
<div class="t rn" style="left:1055.2px">18</div>
<svg style="left:380px;top:129px" width="12" height="24" viewBox="380 129 12 24">
 <path d="M381.500 130.500h8v3l-4 4.400-4-4.400z" fill="#fff" stroke="#7a7a7a" stroke-width="1"/>
 <path d="M385.500 137.900l4 4.400v3h-8v-3z" fill="#fff" stroke="#7a7a7a" stroke-width="1"/>
 <rect x="381.500" y="145.300" width="8" height="6.200" fill="#fff" stroke="#7a7a7a" stroke-width="1"/>
</svg>
<svg style="left:981px;top:137px" width="12" height="10" viewBox="981 137 12 10">
 <path d="M986.500 138.200l4.200 4.200v2.900h-8.400v-2.900z" fill="#fff" stroke="#7a7a7a" stroke-width="1"/>
</svg>
<!-- vertical ruler -->
<div class="a" style="left:5px;top:168px;width:11px;height:514px;background:#fff"></div>
<div class="a" style="left:5px;top:168px;width:11px;height:98px;background:#c6c6c6"></div>
<svg style="left:0;top:160px" width="20" height="522" viewBox="0 160 20 522" shape-rendering="crispEdges"><g fill="#3a3a3a"><rect x="11" y="198" width="2" height="1"/><rect x="10" y="207" width="5" height="1"/><rect x="11" y="217" width="2" height="1"/><rect x="11" y="236" width="2" height="1"/><rect x="10" y="245" width="5" height="1"/><rect x="11" y="255" width="2" height="1"/><rect x="11" y="274" width="2" height="1"/><rect x="10" y="283" width="5" height="1"/><rect x="11" y="293" width="2" height="1"/><rect x="11" y="311" width="2" height="1"/><rect x="10" y="321" width="5" height="1"/><rect x="11" y="330" width="2" height="1"/><rect x="11" y="349" width="2" height="1"/><rect x="10" y="358" width="5" height="1"/><rect x="11" y="368" width="2" height="1"/><rect x="11" y="387" width="2" height="1"/><rect x="10" y="396" width="5" height="1"/><rect x="11" y="406" width="2" height="1"/><rect x="11" y="425" width="2" height="1"/><rect x="10" y="434" width="5" height="1"/><rect x="11" y="444" width="2" height="1"/><rect x="11" y="463" width="2" height="1"/><rect x="10" y="472" width="5" height="1"/><rect x="11" y="482" width="2" height="1"/><rect x="11" y="500" width="2" height="1"/><rect x="10" y="510" width="5" height="1"/><rect x="11" y="519" width="2" height="1"/><rect x="11" y="538" width="2" height="1"/><rect x="10" y="547" width="5" height="1"/><rect x="11" y="557" width="2" height="1"/><rect x="11" y="576" width="2" height="1"/><rect x="10" y="585" width="5" height="1"/><rect x="11" y="595" width="2" height="1"/><rect x="11" y="614" width="2" height="1"/><rect x="10" y="623" width="5" height="1"/><rect x="11" y="633" width="2" height="1"/><rect x="11" y="652" width="2" height="1"/><rect x="10" y="661" width="5" height="1"/><rect x="11" y="671" width="2" height="1"/></g></svg>
<div class="a" style="left:0;top:168px;width:20px;height:514px;overflow:hidden">
<div class="t vn" style="top:13.4px">2</div>
<div class="t vn" style="top:51.2px">1</div>
<div class="t vn" style="top:126.8px">1</div>
<div class="t vn" style="top:164.6px">2</div>
<div class="t vn" style="top:202.3px">3</div>
<div class="t vn" style="top:240.1px">4</div>
<div class="t vn" style="top:277.9px">5</div>
<div class="t vn" style="top:315.7px">6</div>
<div class="t vn" style="top:353.5px">7</div>
<div class="t vn" style="top:391.2px">8</div>
<div class="t vn" style="top:429.0px">9</div>
<div class="t vn" style="top:466.8px">10</div>
<div class="t vn" style="top:504.6px">11</div>
</div>
<!-- vertical scrollbar -->
<div class="a" style="left:1350px;top:384px;width:15px;height:281px;background:#dadada"></div>
<div class="a" style="left:1350px;top:130px;width:13px;height:13px;background:#fff;border:1px solid #ababab"></div>
<svg style="left:1354px;top:135px" width="8" height="5" viewBox="0 0 8 5"><g fill="#737373" shape-rendering="crispEdges"><rect x="3" y="0" width="1" height="1"/><rect x="2" y="1" width="3" height="1"/><rect x="1" y="2" width="5" height="1"/><rect x="0" y="3" width="7" height="1"/></g></svg>
<div class="a" style="left:1350px;top:145px;width:13px;height:236px;background:#fff;border:1px solid #ababab"></div>
<div class="a" style="left:1350px;top:665px;width:13px;height:13px;background:#fff;border:1px solid #d0d0d0"></div>
<svg style="left:1354px;top:671px" width="8" height="5" viewBox="0 0 8 5"><g fill="#737373" shape-rendering="crispEdges"><rect x="0" y="0" width="7" height="1"/><rect x="1" y="1" width="5" height="1"/><rect x="2" y="2" width="3" height="1"/><rect x="3" y="3" width="1" height="1"/></g></svg>

<!-- ===== STATUS BAR ===== -->
<div id="status" class="a">
  <div class="t" style="left:7.500px;transform:scaleX(.965)">Page 1 of 1</div>
  <div class="t" style="left:84.300px;transform:scaleX(1.043)">0 words</div>
  <div class="t" style="left:144.400px;transform:scaleX(1.024)">English (United States)</div>
  <div class="a" style="left:1109px;top:0;width:38px;height:18px;background:#c6c6c6"></div>
  <div class="t" style="left:1328.100px;transform:scaleX(.926)">100 %</div>
</div>
<svg style="left:0;top:683px" width="1366" height="18" viewBox="0 683 1366 18">
 <!-- macro icon -->
 <g shape-rendering="crispEdges">
  <rect x="281" y="690" width="10" height="8" fill="#fff"/>
  <g fill="#808080">
   <rect x="286" y="687" width="6" height="3"/><rect x="291" y="687" width="1" height="12"/><rect x="280" y="698" width="12" height="1"/><rect x="280" y="693" width="1" height="6"/>
   <rect x="285" y="692" width="2" height="1"/><rect x="288" y="692" width="2" height="1"/>
   <rect x="282" y="694" width="2" height="1"/><rect x="285" y="694" width="2" height="1"/><rect x="288" y="694" width="2" height="1"/>
   <rect x="282" y="696" width="2" height="1"/><rect x="285" y="696" width="2" height="1"/><rect x="288" y="696" width="2" height="1"/>
  </g>
 </g>
 <circle cx="281.900" cy="689" r="2.900" fill="#808080"/>
 <!-- read mode -->
 <g shape-rendering="crispEdges">
  <rect x="1083.500" y="686.500" width="12" height="10" fill="#fafafa" stroke="#6a6a6a" stroke-width="1"/>
  <g fill="#6a6a6a">
   <rect x="1089" y="686" width="1" height="12"/>
   <rect x="1085" y="688" width="3" height="1"/><rect x="1085" y="690" width="3" height="1"/><rect x="1085" y="692" width="3" height="1"/><rect x="1085" y="694" width="3" height="1"/>
   <rect x="1091" y="688" width="3" height="1"/><rect x="1091" y="690" width="3" height="1"/><rect x="1091" y="692" width="3" height="1"/><rect x="1091" y="694" width="3" height="1"/>
  </g>
 </g>
 <path d="M1087.500 696.800l2 2 2-2z" fill="#6a6a6a"/>
 <!-- print layout -->
 <g shape-rendering="crispEdges">
  <rect x="1121.500" y="686.500" width="13" height="12" fill="#c6c6c6" stroke="#6a6a6a" stroke-width="1"/>
  <g fill="#6a6a6a"><rect x="1123" y="688" width="10" height="1"/><rect x="1123" y="690" width="10" height="1"/><rect x="1123" y="692" width="10" height="1"/><rect x="1123" y="694" width="10" height="1"/><rect x="1123" y="696" width="10" height="1"/></g>
 </g>
 <!-- web layout -->
 <g shape-rendering="crispEdges">
  <path d="M1166 696.500h-6.500v-10h11v5" fill="none" stroke="#6a6a6a" stroke-width="1"/>
  <g fill="#6a6a6a"><rect x="1161" y="688" width="8" height="1"/><rect x="1161" y="690" width="8" height="1"/><rect x="1161" y="692" width="5" height="1"/><rect x="1161" y="694" width="4" height="1"/></g>
 </g>
 <circle cx="1169" cy="694.900" r="3.700" fill="#6a6a6a"/>
 <path d="M1166.800 693.200c.8-.6 1.600-.4 2 .3.300.700-.3 1.300.2 1.900.500.500.200 1.300-.500 1.600M1170.300 692.600c.900.300 1.300 1.200.900 2.100" fill="none" stroke="#e4e4e4" stroke-width="1"/>
 <!-- zoom slider -->
 <g shape-rendering="crispEdges" fill="#6a6a6a">
  <rect x="1190" y="692" width="6" height="2" fill="#555"/>
  <rect x="1200" y="692" width="100" height="1" fill="#a8a8a8"/>
  <rect x="1248" y="687" width="4" height="11" fill="#666"/>
  <rect x="1304" y="692" width="8" height="2" fill="#555"/><rect x="1307" y="689" width="2" height="8" fill="#555"/>
 </g>
</svg>
</body>
</html>
